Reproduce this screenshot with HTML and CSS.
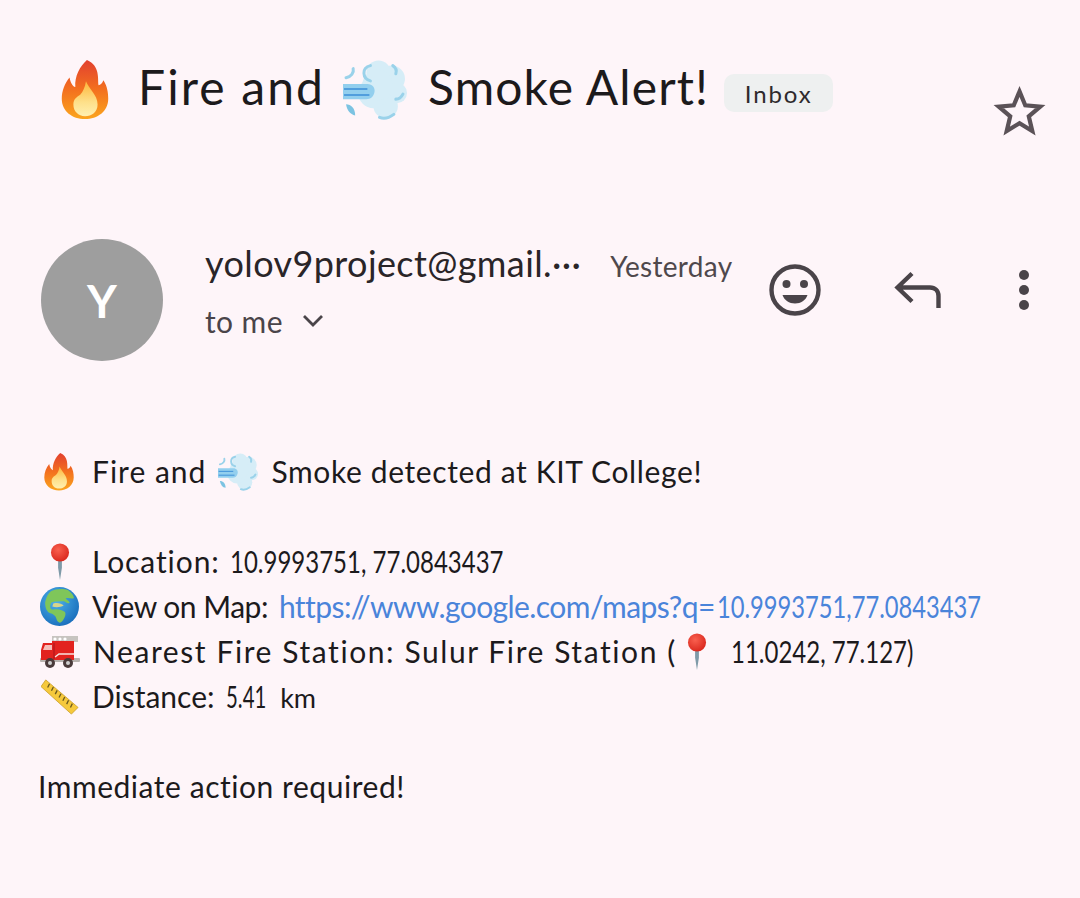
FILE: index.html
```html
<!DOCTYPE html>
<html lang="en">
<head>
<meta charset="utf-8">
<title>Fire and Smoke Alert</title>
<link rel="stylesheet" href="styles.css">
</head>
<body>
<svg class="sprite" aria-hidden="true">
  <defs>
    <linearGradient id="flameOuter" x1="0" y1="0" x2="0" y2="1">
      <stop offset="0" stop-color="#e2402f"/><stop offset=".5" stop-color="#f3701f"/><stop offset="1" stop-color="#fba51e"/>
    </linearGradient>
    <linearGradient id="flameInner" x1="0" y1="0" x2="0" y2="1">
      <stop offset="0" stop-color="#fdb53a"/><stop offset=".6" stop-color="#fee08a"/><stop offset="1" stop-color="#fff0b0"/>
    </linearGradient>
    <radialGradient id="pinHead" cx=".4" cy=".35" r=".7">
      <stop offset="0" stop-color="#f9604f"/><stop offset="1" stop-color="#d9261c"/>
    </radialGradient>
    <radialGradient id="ocean" cx=".4" cy=".35" r=".75">
      <stop offset="0" stop-color="#4fb2ea"/><stop offset="1" stop-color="#1468b8"/>
    </radialGradient>
    <symbol id="e-flame" viewBox="0 0 48 62">
      <path fill="url(#flameOuter)" d="M26 0C40 6 37 20 38 26C40 26 42 24 43 21C47 27 48 34 48 40C48 53 37 61 24 61C11 61 0 53 0 40C0 32 3 24 8 18C9 23 11 27 14 28C13 17 19 6 26 0Z"/>
      <path fill="url(#flameInner)" d="M25 22C28 30 37 36 37 46C37 54 31 58 24 58C17 58 12 53 12 46C12 40 16 38 19 36C22 33 24 28 25 22Z"/>
    </symbol>
    <symbol id="e-dash" viewBox="0 0 63 58">
      <g fill="#d6edf7">
        <circle cx="35" cy="12" r="12"/><circle cx="48" cy="18" r="13"/><circle cx="53" cy="32" r="10"/>
        <circle cx="42" cy="45" r="12"/><circle cx="30" cy="32" r="15"/><circle cx="34" cy="24" r="15"/>
      </g>
      <path fill="#93cfee" d="M0 23H24C29 23 32 27 31 31C30 36 27 38 23 38H0Z"/>
      <path stroke="#3c8fd8" stroke-width="1.500" fill="none" d="M1 28H24M1 34H26"/>
      <g fill="none" stroke="#9ad2ea" stroke-width="3" stroke-linecap="round">
        <path d="M27 5C18 7 19 18 27 20"/>
        <path d="M10 8C11 12 8 16 3 17"/>
        <path d="M49 5C52 7 53 10 52 13"/>
        <path d="M59 33C57 37 54 38 52 38"/>
        <path d="M36 56C41 58 46 56 50 53"/>
      </g>
      <path fill="#7cc3e2" d="M3 43C8 43 12 47 12 54C7 53 4 49 3 43Z"/>
    </symbol>
    <symbol id="e-pin" viewBox="0 0 24 40">
      <path fill="#7f9aa8" d="M10 14H14V26L12 39L10 26Z"/>
      <circle cx="12" cy="10" r="9.500" fill="url(#pinHead)"/>
    </symbol>
    <symbol id="e-globe" viewBox="0 0 38 38">
      <circle cx="19" cy="19" r="19" fill="url(#ocean)"/>
      <path fill="#7fc65a" d="M11 4C15 2 22 1 27 3C30 5 33 8 33 11C30 12 28 10 25 11C26 13 28 13 29 15C27 17 26 15 23 14C19 14 14 14 11 15C9 19 10 22 13 22C17 21 21 22 24 24C26 26 24 30 22 33C20 36 17 35 16 31C15 27 12 26 9 25C6 23 5 19 5 15C6 10 8 6 11 4Z"/>
      <path fill="#d9d58a" d="M13 16C17 15 21 16 23 18C20 20 15 20 12 19Z"/>
    </symbol>
    <symbol id="e-truck" viewBox="0 0 40 32">
      <rect x="0" y="22" width="40" height="4" rx="1" fill="#b9b4b0"/>
      <rect x="12" y="0" width="26" height="6" fill="#c7c4c0"/>
      <circle cx="15" cy="3" r="1.600" fill="#fff"/><circle cx="20" cy="3" r="1.600" fill="#fff"/><circle cx="25" cy="3" r="1.600" fill="#fff"/>
      <path fill="#e2231f" d="M3 7H12V5H34V24H1V14Z"/>
      <path fill="#f5bdb8" d="M5 9H12V14H3Z"/>
      <path stroke="#f7e3e0" stroke-width="1.500" fill="none" d="M15 21L19 18H34"/>
      <path stroke="#a8151a" stroke-width="1" d="M14 7V23"/>
      <circle cx="10" cy="27" r="5" fill="#4a3b3b"/><circle cx="10" cy="27" r="2" fill="#cfcfcf"/>
      <circle cx="28" cy="27" r="5" fill="#4a3b3b"/><circle cx="28" cy="27" r="2" fill="#cfcfcf"/>
    </symbol>
    <symbol id="e-ruler" viewBox="0 0 40 38">
      <path fill="#f6c93c" stroke="#c79a1e" stroke-width=".8" d="M5 1L39 30L32 37L0 8Z"/>
      <path stroke="#6b5a1e" stroke-width="1.400" d="M9 5L7 9M13 8.500L11 12.500M17 12L15 16M21 15.500L19 19.500M25 19L23 23M29 22.500L27 26.500M33 26L31 30"/>
    </symbol>
  </defs>
</svg>

<main class="mail">
  <header class="subject">
    <svg class="emoji-flame-lg" role="img" aria-label="fire"><use href="#e-flame"/></svg>
    <h1 class="title title-a">Fire and</h1>
    <svg class="emoji-dash-lg" role="img" aria-label="smoke"><use href="#e-dash"/></svg>
    <h1 class="title title-b">Smoke Alert!</h1>
    <span class="badge">Inbox</span>
    <svg class="star" viewBox="0 0 24 24" role="img" aria-label="star"><path fill="none" stroke="#5b5257" stroke-width="1.900" d="M12 2.900L14.600 9.200L21.400 9.800L16.200 14.200L17.800 20.900L12 17.300L6.200 20.900L7.800 14.200L2.600 9.800L9.400 9.200Z"/></svg>
  </header>

  <section class="sender">
    <div class="avatar">Y</div>
    <div class="who">
      <div class="who-top">
        <span class="name">yolov9project@gmail.···</span>
        <span class="date">Yesterday</span>
      </div>
      <div class="to">
        <span class="to-text">to me</span>
        <svg class="chev" viewBox="0 0 22 14" aria-hidden="true"><path fill="none" stroke="#4a4449" stroke-width="2.800" d="M2 2L11 11L20 2"/></svg>
      </div>
    </div>
    <div class="actions">
      <svg class="smile" viewBox="0 0 52 52" role="img" aria-label="react">
        <circle cx="26" cy="26" r="23.500" fill="none" stroke="#4a4449" stroke-width="4.400"/>
        <circle cx="17.500" cy="20" r="4" fill="#4a4449"/><circle cx="35" cy="20" r="4" fill="#4a4449"/>
        <path fill="#4a4449" d="M13.500 31H38.500C36.500 36.500 32 39.500 26 39.500C20 39.500 15.500 36.500 13.500 31Z"/>
      </svg>
      <svg class="reply" viewBox="0 0 48 38" role="img" aria-label="reply"><path fill="none" stroke="#4a4449" stroke-width="4.400" d="M18 2.500L3.500 16.500L18 30.500M3.500 16.500H36C41 16.500 44.500 20 44.500 25V37"/></svg>
      <svg class="dots" viewBox="0 0 12 42" role="img" aria-label="more"><circle cx="6" cy="6" r="5" fill="#4a4449"/><circle cx="6" cy="21" r="5" fill="#4a4449"/><circle cx="6" cy="36" r="5" fill="#4a4449"/></svg>
    </div>
  </section>

  <article class="message">
    <p class="line">
      <svg class="em em-flame" role="img" aria-label="fire"><use href="#e-flame"/></svg>
      <span class="t l1a">Fire and</span>
      <svg class="em em-dash" role="img" aria-label="smoke"><use href="#e-dash"/></svg>
      <span class="t l1b">Smoke detected at KIT College!</span>
    </p>
    <p class="line blank"></p>
    <p class="line">
      <svg class="em em-pin" role="img" aria-label="pin"><use href="#e-pin"/></svg>
      <span class="t l2">Location: <span class="num num-loc">10.9993751, 77.0843437</span></span>
    </p>
    <p class="line">
      <svg class="em em-globe" role="img" aria-label="globe"><use href="#e-globe"/></svg>
      <span class="t l3">View on Map:</span>
      <a class="t link" href="#">https://www.google.com/maps?q=<span class="num num-link">10.9993751,77.0843437</span></a>
    </p>
    <p class="line">
      <svg class="em em-truck" role="img" aria-label="fire engine"><use href="#e-truck"/></svg>
      <span class="t l4a">Nearest Fire Station: Sulur Fire Station (</span>
      <svg class="em em-pin2" role="img" aria-label="pin"><use href="#e-pin"/></svg>
      <span class="t num num-st">11.0242, 77.127)</span>
    </p>
    <p class="line">
      <svg class="em em-ruler" role="img" aria-label="ruler"><use href="#e-ruler"/></svg>
      <span class="t l5">Distance: <span class="num num-dist">5.41</span> <span class="km">km</span></span>
    </p>
    <p class="line blank"></p>
    <p class="line action"><span class="t l6">Immediate action required!</span></p>
  </article>
</main>
</body>
</html>
```
FILE: styles.css
```css
* { box-sizing: border-box; }
html, body { margin: 0; padding: 0; }
body {
  background: #fef5f9;
  color: #1c1a1c;
  font-family: Lato, "Noto Sans", sans-serif;
  height: 898px;
  overflow: hidden;
}
.sprite { width: 0; height: 0; position: absolute; }
.mail { display: flex; flex-direction: column; }

/* subject */
.subject { display: flex; align-items: flex-start; height: 239px; padding: 60px 34px 0 57px; }
.emoji-flame-lg { width: 56px; height: 60px; flex: none; }
.emoji-dash-lg { width: 64px; height: 60px; flex: none; margin: 0 21px 0 18px; }
.title { margin: -2px 0 0; font-size: 48px; font-weight: 400; line-height: 58px; white-space: pre; }
.title-a { margin-left: 25px; letter-spacing: 2.100px; }
.title-b { letter-spacing: 1.100px; }
.badge {
  margin: 14px 0 0 15px;
  width: 109px; height: 38px;
  display: flex; align-items: center; justify-content: center;
  background: #eef0f0; border-radius: 10px;
  font-size: 24px; color: #2e2a2d; letter-spacing: 1.900px;
}
.star { width: 53px; height: 53px; flex: none; margin: 25px 0 0 auto; }

/* sender */
.sender { display: flex; align-items: flex-start; height: 210px; padding: 0 40px 0 41px; }
.avatar {
  width: 122px; height: 122px; border-radius: 50%; flex: none;
  background: #9e9e9e; color: #fff;
  display: flex; align-items: center; justify-content: center;
  font-size: 46px; font-weight: 700;
}
.who { margin-left: 42px; width: 562px; padding-top: 2px; flex: none; }
.who-top { display: flex; align-items: baseline; height: 46px; }
.name { font-size: 36px; letter-spacing: .4px; color: #2a2528; white-space: pre; }
.date { margin-left: 29px; font-size: 28px; color: #4f484c; letter-spacing: .3px; }
.to { display: flex; align-items: center; height: 42px; margin-top: 13px; }
.to-text { font-size: 30px; color: #4a4449; letter-spacing: .4px; }
.chev { width: 22px; height: 14px; margin-left: 19px; }
.actions { display: flex; align-items: center; height: 102px; margin-left: 2px; flex: 1; }
.smile { width: 52px; height: 52px; flex: none; }
.reply { width: 48px; height: 38px; flex: none; margin-left: 73px; }
.dots { width: 12px; height: 42px; flex: none; margin-left: 76px; }

/* body */
.message { display: flex; flex-direction: column; padding-left: 41px; }
.line { margin: 0; height: 45px; display: flex; align-items: center; white-space: pre; }
.t { font-size: 30px; line-height: 45px; color: #1c1a1c; }
/* the reference's digits are far narrower than any installed face */
.num { display: inline-block; letter-spacing: 0; transform: scaleX(.8); transform-origin: 0 50%; }
.num-loc { margin: 0 -68px 0 2px; }
.num-link { margin: 0 -69px 0 2px; transform: scaleX(.79); }
.num-st { margin: 0 -46px 0 2px; }
.num-dist { margin: 0 -13px 0 4px; transform: scaleX(.68); }
.km { font-size: 27px; }
.em { flex: none; }
.em-flame { width: 36px; height: 38px; margin-right: 15px; }
.em-dash { width: 40px; height: 38px; margin: 0 13px 0 12px; }
.em-pin { width: 24px; height: 38px; margin: 0 20px 0 7px; }
.em-globe { width: 39px; height: 39px; margin: 0 13px 0 -1px; }
.em-truck { width: 40px; height: 32px; margin: 0 13px 0 -1px; }
.em-ruler { width: 38px; height: 38px; margin-right: 13px; }
.em-pin2 { width: 24px; height: 38px; margin: 0 20px 0 8px; }
.l1a { letter-spacing: 1px; }
.l1b { letter-spacing: .63px; }
.l2 { letter-spacing: .9px; }
.l3 { letter-spacing: -.5px; }
.l4a { letter-spacing: 1.580px; }
.l6 { letter-spacing: .54px; }
.link { color: #4a84da; text-decoration: none; margin-left: 11px; letter-spacing: -.57px; }
.action { margin-left: -3px; }
```
